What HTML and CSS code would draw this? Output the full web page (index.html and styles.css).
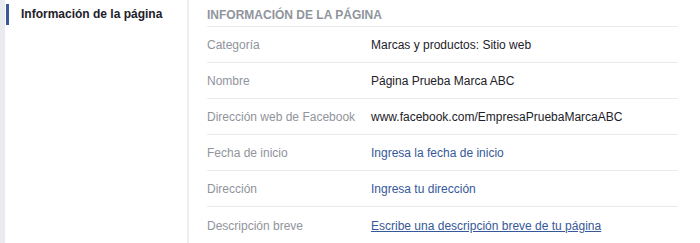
FILE: index.html
```html
<!DOCTYPE html>
<html lang="es">
<head>
<meta charset="utf-8">
<title>Información de la página</title>
<link rel="stylesheet" href="styles.css">
</head>
<body>
<div class="page">
  <div class="gutter"></div>
  <nav class="sidebar">
    <div class="nav-item">Información de la página</div>
  </nav>
  <main class="main">
    <div class="heading">INFORMACIÓN DE LA PÁGINA</div>
    <div class="row"><span class="label">Categoría</span><span class="value">Marcas y productos: Sitio web</span></div>
    <div class="row"><span class="label">Nombre</span><span class="value">Página Prueba Marca ABC</span></div>
    <div class="row"><span class="label">Dirección web de Facebook</span><span class="value">www.facebook.com/EmpresaPruebaMarcaABC</span></div>
    <div class="row"><span class="label">Fecha de inicio</span><a class="link" href="#">Ingresa la fecha de inicio</a></div>
    <div class="row"><span class="label">Dirección</span><a class="link" href="#">Ingresa tu dirección</a></div>
    <div class="row last"><span class="label">Descripción breve</span><a class="link underline" href="#">Escribe una descripción breve de tu página</a></div>
  </main>
</div>
</body>
</html>
```
FILE: styles.css
```css
html, body {
  margin: 0;
  padding: 0;
  background: #ffffff;
}
body {
  font-family: "Liberation Sans", Arial, Helvetica, sans-serif;
  font-size: 12px;
  color: #1d2129;
}
.page {
  display: flex;
  height: 243px;
  overflow: hidden;
}
.gutter {
  width: 5px;
  flex: none;
  background: #e9ebee;
}
.sidebar {
  width: 184px;
  flex: none;
  border-right: 2px solid #eceef1;
  padding-top: 4px;
  box-sizing: border-box;
}
.nav-item {
  margin-left: 1px;
  border-left: 3px solid #3b5998;
  padding-left: 12px;
  height: 21px;
  line-height: 21px;
  font-weight: bold;
  color: #1d2129;
}
.main {
  flex: 1;
  padding: 0 22px 0 18px;
}
.heading {
  height: 27px;
  box-sizing: border-box;
  padding-top: 7px;
  line-height: 16px;
  font-weight: bold;
  color: #90949c;
  border-bottom: 1px solid #e9ebee;
}
.row {
  display: flex;
  align-items: center;
  height: 36px;
  box-sizing: border-box;
  border-bottom: 1px solid #e9ebee;
  padding-top: 1px;
}
.row.last {
  border-bottom: none;
}
.label {
  width: 164px;
  flex: none;
  color: #90949c;
}
.value {
  color: #1d2129;
}
.link {
  color: #365899;
  text-decoration: none;
}
.link.underline {
  text-decoration: underline;
}
```
